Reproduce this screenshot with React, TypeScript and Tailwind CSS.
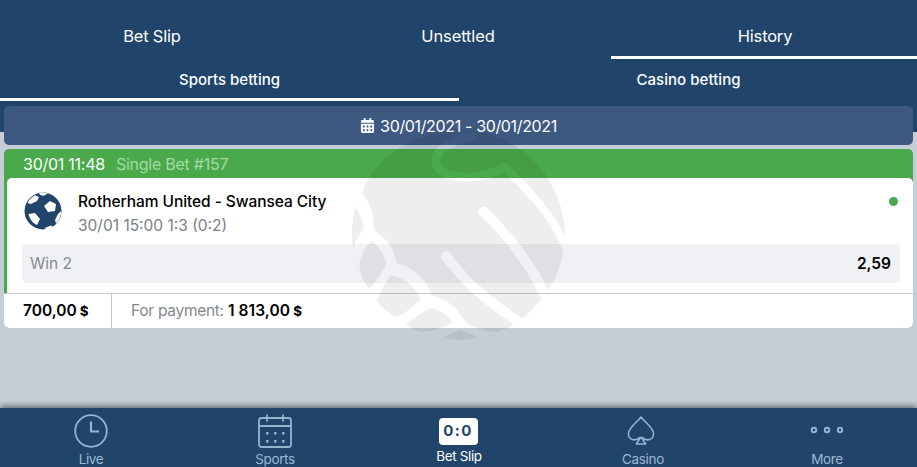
import { FaCalendarAlt } from "react-icons/fa";

const iconColor = "#95b4d0";

function Watermark() {
  return (
    <svg className="pointer-events-none absolute left-[340px] top-[130px] z-10" width="240" height="210" viewBox="0 0 720 630">
      <defs>
        <mask id="wm" maskUnits="userSpaceOnUse" x="0" y="-20" width="720" height="660">
          <path fill="#fff" d="M65,190 C110,70 230,5 360,0 C530,0 675,140 675,320 C672,370 660,420 635,462 C600,520 540,590 470,605 C430,605 390,590 372,570 C350,530 320,510 275,495 C255,440 215,410 170,400 C160,350 135,320 100,300 C105,260 90,215 65,190 Z" />
          <g fill="none" stroke="#000" strokeLinecap="round">
            <path strokeWidth="26" d="M395,18 C330,35 285,60 288,95 C295,135 350,145 400,140 C440,135 470,125 495,112" />
            <path strokeWidth="24" strokeLinecap="butt" d="M495,112 C570,185 650,270 680,360" />
            <path strokeWidth="30" d="M430,245 C500,310 570,400 612,490" />
            <path strokeWidth="30" d="M318,378 C370,450 450,520 540,578" />
          </g>
        </mask>
      </defs>
      <rect x="0" y="-20" width="720" height="660" fill="#000" fillOpacity="0.065" mask="url(#wm)" />
      <g fill="#000" fillOpacity="0.065">
        <path d="M46,230 C64,255 75,285 70,300 C55,315 45,335 40,355 C32,320 36,270 46,230 Z" />
        <path d="M95,333 C120,350 135,380 138,405 C125,430 105,460 88,476 C70,460 58,430 58,400 C62,375 78,350 95,333 Z" />
        <path d="M155,436 C195,445 230,475 243,508 C220,530 190,555 170,562 C145,550 120,530 112,510 C120,485 138,455 155,436 Z" />
        <path d="M270,533 C300,540 325,555 337,578 C305,595 270,605 240,606 C225,600 205,590 198,582 C220,565 250,545 270,533 Z" />
        <path d="M360,598 C380,605 400,615 412,625 C380,632 340,632 310,625 C325,615 345,605 360,598 Z" />
      </g>
    </svg>
  );
}

function Ball() {
  return (
    <svg width="38" height="38" viewBox="0 0 38 38" className="shrink-0">
      <circle cx="19" cy="19" r="18.5" fill="#20446a" />
      <g fill="#fff">
        <path d="M26,9 L32,12 L31,19 L24,20 L20,14 Z" />
        <path d="M4.500,22 L11,21 L16,27 L13,33 C9,31.500 5.500,27 4.500,22 Z" />
        <path d="M11,3.200 L15,5 L13,9 L7,12 L3.500,11 C5,7.500 8,5 11,3.200 Z" />
        <path d="M15,1 C18,0.300 21,0.400 24,1.200 L20,3.800 L16,3 Z" />
        <path d="M37.200,19 C37.200,24 35,28.500 32,31.500 L31,28 L34,22 Z" />
        <path d="M20,36.200 L27,33.500 L29,35 C26,37 23,37.600 20,36.200 Z" />
      </g>
    </svg>
  );
}

function NavItem({ label, children }: { label: string; children: React.ReactNode }) {
  return (
    <div className="flex flex-1 flex-col items-center">
      <div className="flex h-[44px] items-center justify-center">{children}</div>
      <span className="text-[13.5px] leading-[14px] tracking-[-0.35px] text-[#9db8d0]">{label}</span>
    </div>
  );
}

export default function App() {
  return (
    <div className="relative flex h-[467px] w-[917px] flex-col overflow-hidden bg-[#c5cdd6] font-['Inter',sans-serif] text-black">
      <header className="h-[132px] shrink-0 bg-[#20446a] text-white">
        <div className="flex h-[59px]">
          <div className="flex flex-1 items-start justify-center pt-[24px] text-[16.5px] leading-[24px] tracking-[-0.2px]">Bet Slip</div>
          <div className="flex flex-1 items-start justify-center pl-[2px] pt-[24px] text-[16.5px] leading-[24px] tracking-[-0.1px]">Unsettled</div>
          <div className="ml-[1px] flex flex-1 items-start justify-center border-b-[3px] border-white pl-[2px] pt-[24px] text-[16.5px] leading-[24px] tracking-[-0.2px]">History</div>
        </div>
        <div className="flex h-[42px]">
          <div className="flex w-[459px] justify-center border-b-[3px] border-white pt-[10px] text-[15px] font-medium leading-[22px]">Sports betting</div>
          <div className="flex flex-1 justify-center pl-[1px] pt-[10px] text-[15px] font-medium leading-[22px] tracking-[0.05px]">Casino betting</div>
        </div>
      </header>

      <main className="relative mx-1 -mt-[26px] flex flex-col">
        <div className="flex h-[39px] items-center justify-center gap-[5px] rounded-[5px] bg-[#3e5981] text-[16px] tracking-[-0.35px] text-white">
          <FaCalendarAlt className="text-[15px]" />
          <span>30/01/2021 - 30/01/2021</span>
        </div>

        <section className="mt-[4px] overflow-hidden rounded-[5px] bg-[#4aa94a]">
          <div className="flex h-[29px] items-center gap-[11px] pl-[19px] text-[16px] tracking-[-0.25px]">
            <span className="text-white">30/01 11:48</span>
            <span className="text-[#a3dba3]">Single Bet #157</span>
          </div>
          <div className="ml-[3px] rounded-t-[5px] bg-white">
            <div className="flex pl-[17px] pr-[16px] pt-[14px]">
              <Ball />
              <div className="ml-[16px] flex-1">
                <div className="text-[15.5px] font-medium leading-[20px] tracking-[-0.07px]">Rotherham United - Swansea City</div>
                <div className="mt-[4px] text-[15.5px] leading-[20px] text-[#7b7f85]">30/01 15:00 1:3 (0:2)</div>
              </div>
              <div className="mr-[-1px] mt-[5px] h-[9px] w-[9px] rounded-full bg-[#4aa94a]" />
            </div>
            <div className="ml-[15px] mr-[13px] mt-[8px] flex h-[39px] items-center justify-between rounded-[5px] bg-[#eff1f4] pl-[8px] pr-[9px] text-[15.5px]">
              <span className="text-[#85898e]">Win 2</span>
              <span className="font-semibold">2,59</span>
            </div>
            <div className="h-[10px]" />
          </div>
          <div className="flex h-[35px] items-center border-t border-[#c9c9c9] bg-white text-[15.5px]">
            <div className="flex h-full w-[108px] items-center border-r border-[#c9c9c9] pl-[19px] font-semibold">
              700,00<span className="ml-[3px] text-[13.5px] font-bold">$</span>
            </div>
            <div className="pl-[19px] tracking-[-0.28px] text-[#85898e]">
              For payment: <span className="font-semibold tracking-[0.1px] text-black">1 813,00<span className="ml-[3px] text-[13.5px] font-bold">$</span></span>
            </div>
          </div>
        </section>
      </main>

      <Watermark />

      <nav className="relative z-20 mt-auto h-[59px] shrink-0 bg-[#20446a] shadow-[0_-2px_6px_rgba(0,0,0,0.5)]">
        <div className="-ml-[1px] flex h-full w-[920px]">
          <NavItem label="Live">
            <svg width="34" height="34" viewBox="0 0 34 34" fill="none" stroke={iconColor} strokeWidth="1.8" className="mt-[1px]">
              <circle cx="17" cy="17" r="15.8" />
              <path d="M17 7.500V17.500H25" strokeWidth="2.200" />
            </svg>
          </NavItem>
          <NavItem label="Sports">
            <svg width="34" height="34" viewBox="0 0 34 34" fill="none" stroke={iconColor} strokeWidth="1.800" className="mt-[1px]">
              <rect x="1" y="4" width="32" height="29" rx="2.500" />
              <path d="M1 12H33M9 0.500V7.500M25 0.500V7.500" />
              <g fill={iconColor} stroke="none">
                <rect x="8" y="18" width="2.500" height="2.500" /><rect x="16" y="18" width="2.500" height="2.500" /><rect x="24" y="18" width="2.500" height="2.500" />
                <rect x="8" y="26" width="2.500" height="2.500" /><rect x="16" y="26" width="2.500" height="2.500" /><rect x="24" y="26" width="2.500" height="2.500" />
              </g>
            </svg>
          </NavItem>
          <div className="flex flex-1 flex-col items-center pt-[10px]">
            <div className="-ml-[2px] flex h-[27px] w-[39px] items-center justify-center rounded-[4px] bg-white text-[15px] font-bold tracking-[1.5px] text-[#20446a]">0:0</div>
            <span className="mt-[3px] text-[13.5px] leading-[16px] tracking-[-0.35px] text-white">Bet Slip</span>
          </div>
          <NavItem label="Casino">
            <svg width="28" height="31" viewBox="0 0 30 32" fill="none" stroke={iconColor} strokeWidth="1.700" strokeLinejoin="round" className="ml-[-4px] mt-[1px]">
              <path d="M15 1.500C11 7 1.500 13 1.500 19.500C1.500 23.500 4.500 26 8 26C10 26 12 25 14 23.500H16C18 25 20 26 22 26C25.500 26 28.500 23.500 28.500 19.500C28.500 13 19 7 15 1.500Z" />
              <path d="M14.500 23.500L10 30.500H20L15.500 23.500" />
            </svg>
          </NavItem>
          <NavItem label="More">
            <svg width="36" height="10" viewBox="0 0 36 10" fill="none" stroke={iconColor} strokeWidth="2" className="mt-[-1px]">
              <circle cx="5" cy="5" r="2.200" />
              <circle cx="18" cy="5" r="2.200" />
              <circle cx="31" cy="5" r="2.200" />
            </svg>
          </NavItem>
        </div>
      </nav>
    </div>
  );
}
